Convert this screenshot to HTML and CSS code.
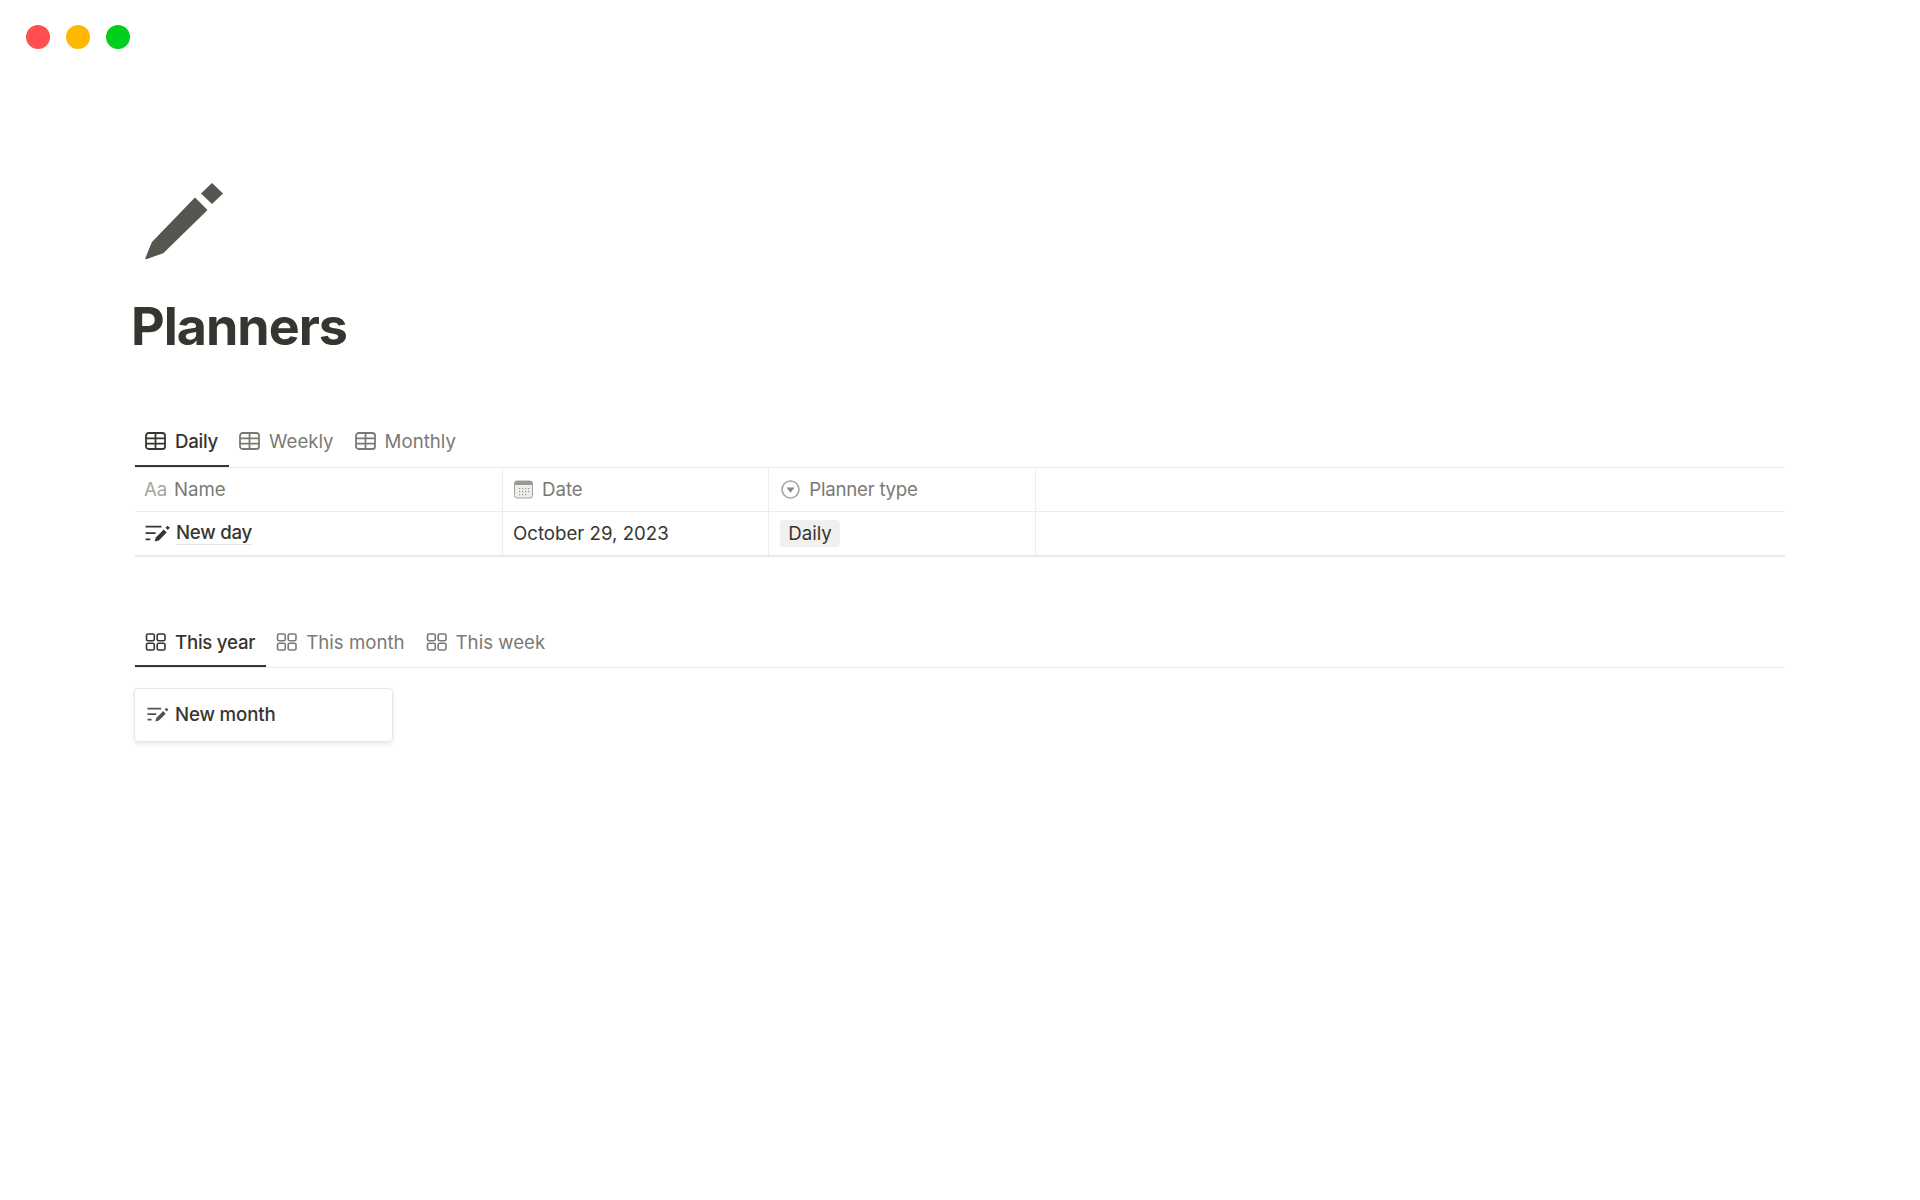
FILE: index.html
```html
<!DOCTYPE html>
<html lang="en">
<head>
<meta charset="utf-8">
<title>Planners</title>
<link rel="stylesheet" href="styles.css">
</head>
<body>
<svg class="defs" width="0" height="0" aria-hidden="true">
  <symbol id="i-table" viewBox="0 0 21 18">
    <rect x="1" y="1" width="19" height="16" rx="2.600" fill="none" stroke="currentColor" stroke-width="1.800"/>
    <path d="M1 6.400H20M1 11.600H20M10.500 1V17" fill="none" stroke="currentColor" stroke-width="1.800"/>
  </symbol>
  <symbol id="i-gallery" viewBox="0 0 21 18">
    <rect x="1.500" y="1" width="7.800" height="6.800" rx="1.600" fill="none" stroke="currentColor" stroke-width="1.600"/>
    <rect x="12.200" y="1" width="7.800" height="6.800" rx="1.600" fill="none" stroke="currentColor" stroke-width="1.600"/>
    <rect x="1.500" y="10.200" width="7.800" height="6.800" rx="1.600" fill="none" stroke="currentColor" stroke-width="1.600"/>
    <rect x="12.200" y="10.200" width="7.800" height="6.800" rx="1.600" fill="none" stroke="currentColor" stroke-width="1.600"/>
  </symbol>
  <symbol id="i-edit" viewBox="0 0 24 16">
    <path d="M0.500 1.600H15.500M0.500 7.600H10M0.500 13.600H5" fill="none" stroke="currentColor" stroke-width="1.700"/>
    <path d="M9 15.600L10.200 11.700L17.600 4.300L20.400 7.100L13 14.500Z" fill="currentColor"/>
    <path d="M21.300 0.600L23.400 2.700L21.400 4.700L19.300 2.600Z" fill="currentColor"/>
  </symbol>
</svg>

<div class="lights">
  <span class="light light-red"></span>
  <span class="light light-amber"></span>
  <span class="light light-green"></span>
</div>

<main class="page">
  <svg class="page-icon" viewBox="0 0 90 90" aria-hidden="true">
    <path d="M11 83.500L17.500 67.500L60 23.500L71.500 35L28 77.500Z" fill="#575550" stroke="#575550" stroke-width="1.500" stroke-linejoin="round"/>
    <path d="M77 8L88 18.500L77 29L66 18.500Z" fill="#575550"/>
  </svg>
  <h1 class="title">Planners</h1>

  <section class="view view-table">
    <nav class="tabs">
      <div class="tab tab-active"><svg class="tab-icon"><use href="#i-table"/></svg><span>Daily</span></div>
      <div class="tab"><svg class="tab-icon"><use href="#i-table"/></svg><span>Weekly</span></div>
      <div class="tab"><svg class="tab-icon"><use href="#i-table"/></svg><span>Monthly</span></div>
    </nav>
    <div class="table">
      <div class="row row-head">
        <div class="cell cell-name"><span class="aa">Aa</span><span>Name</span></div>
        <div class="cell cell-col">
          <svg class="head-icon" viewBox="0 0 19 18" aria-hidden="true">
            <rect x="0.500" y="0.500" width="18" height="17" rx="2.500" fill="#eeedeb" stroke="#a5a4a0"/>
            <path d="M0.500 3A2.500 2.500 0 0 1 3 0.500H16A2.500 2.500 0 0 1 18.500 3V4.500H0.500Z" fill="#9a9995"/>
            <path d="M5 7.500h1.200v1.200H5zM8 7.500h1.200v1.200H8zM11 7.500h1.200v1.200H11zM14 7.500h1.200v1.200H14zM5 10.500h1.200v1.200H5zM8 10.500h1.200v1.200H8zM11 10.500h1.200v1.200H11zM14 10.500h1.200v1.200H14zM5 13.500h1.200v1.200H5zM8 13.500h1.200v1.200H8zM11 13.500h1.200v1.200H11z" fill="#9a9995"/>
          </svg>
          <span>Date</span>
        </div>
        <div class="cell cell-col cell-type">
          <svg class="head-icon" viewBox="0 0 19 19" aria-hidden="true">
            <circle cx="9.500" cy="9.500" r="8.500" fill="none" stroke="#a5a4a0" stroke-width="1.600"/>
            <path d="M5.500 7.500H13.500L9.500 12.800Z" fill="#8a8985"/>
          </svg>
          <span class="label-type">Planner type</span>
        </div>
        <div class="cell cell-rest"></div>
      </div>
      <div class="row row-body">
        <div class="cell cell-name"><svg class="edit-icon"><use href="#i-edit"/></svg><span class="page-link">New day</span></div>
        <div class="cell cell-col"><span>October 29, 2023</span></div>
        <div class="cell cell-col cell-type"><span class="pill">Daily</span></div>
        <div class="cell cell-rest"></div>
      </div>
    </div>
  </section>

  <section class="view view-gallery">
    <nav class="tabs">
      <div class="tab tab-active"><svg class="tab-icon"><use href="#i-gallery"/></svg><span>This year</span></div>
      <div class="tab"><svg class="tab-icon"><use href="#i-gallery"/></svg><span>This month</span></div>
      <div class="tab"><svg class="tab-icon"><use href="#i-gallery"/></svg><span>This week</span></div>
    </nav>
    <div class="card"><svg class="card-icon"><use href="#i-edit"/></svg><span>New month</span></div>
  </section>
</main>
</body>
</html>
```
FILE: styles.css
```css
* { box-sizing: border-box; }
html, body { margin: 0; padding: 0; background: #fff; }
body {
  height: 1200px;
  overflow: hidden;
  font-family: Inter, "Liberation Sans", sans-serif;
  font-size: 18.67px;
  color: #37352f;
  -webkit-font-smoothing: antialiased;
}
.defs { position: absolute; }

.lights { display: flex; gap: 16px; padding: 25px 0 0 26px; height: 49px; }
.light { width: 24px; height: 24px; border-radius: 50%; }
.light-red { background: #ff4f50; }
.light-amber { background: #ffb700; }
.light-green { background: #00cf1c; }

.page { width: 1650px; margin-left: 135px; }
.page-icon { display: block; width: 90px; height: 90px; margin-top: 126px; }

.title {
  margin: 27px 0 0 -4px;
  font-size: 52px;
  line-height: 70px;
  font-weight: 700;
  letter-spacing: -1px;
  color: #37352f;
}

.view-table { margin-top: 58px; }
.view-gallery { margin-top: 63px; }

.tabs { display: flex; height: 48px; border-bottom: 1.33px solid #ededec; }
.tab {
  display: flex;
  align-items: center;
  gap: 9px;
  padding: 0 11px 1px 10px;
  border-bottom: 2.67px solid transparent;
  color: #7b7975;
  white-space: nowrap;
}
.view-table .tab { padding-bottom: 3px; }
.tab-active { color: #37352f; font-weight: 500; letter-spacing: -0.25px; border-bottom-color: #37352f; }
.tab-icon { width: 21px; height: 18px; flex: none; }

.row { display: flex; height: 44px; border-bottom: 1.33px solid #ededec; }
.row-body { height: 45px; border-bottom: 2.67px solid #ebeae8; }
.cell { display: flex; align-items: center; padding: 0 10px; border-right: 1.33px solid #ededec; white-space: nowrap; }
.cell-name { width: 368px; }
.cell-col { width: 266.3px; }
.cell-type { padding-left: 11px; }
.cell-rest { flex: 1; border-right: 0; }

.row-head { color: #7b7975; }
.row-head .cell { padding-bottom: 1px; }
.aa { width: 30px; margin-left: -1px; color: #a5a4a0; }
.head-icon { width: 19px; height: 19px; margin: 0 9px 0 1px; flex: none; }
.label-type { letter-spacing: -0.25px; }

.edit-icon { width: 25.5px; height: 17px; margin-right: 5.5px; flex: none; color: #37352f; }
.page-link { font-weight: 500; letter-spacing: -0.25px; border-bottom: 1px solid #e3e2e0; line-height: 22px; }
.pill { background: #f1f0ee; border-radius: 4px; padding: 0 8px; height: 27px; line-height: 27px; }

.card {
  display: flex;
  align-items: center;
  width: 259px;
  height: 54px;
  margin: 20px 0 0 -1px;
  padding: 0 0 2px 12px;
  border: 1px solid #e8e7e5;
  border-radius: 4px;
  box-shadow: 0 2px 4px rgba(15, 15, 15, 0.1);
  font-weight: 500;
  letter-spacing: -0.15px;
}
.card-icon { width: 22px; height: 15px; margin-right: 6px; flex: none; color: #55534e; }
```
